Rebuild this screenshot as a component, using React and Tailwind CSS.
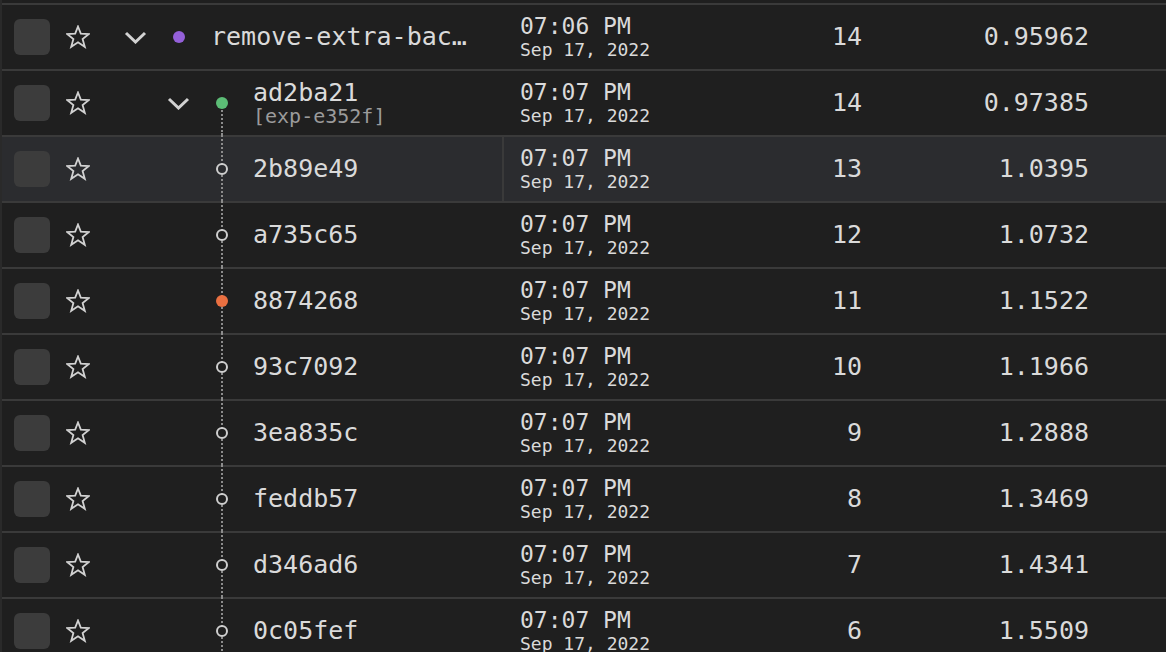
import React from 'react';

const rows = [
  { id: 'remove-extra-background-check', depth: 0, chevron: true, marker: 'purple', time: '07:06 PM', step: 14, metric: '0.95962', clip: true },
  { id: 'ad2ba21', tag: '[exp-e352f]', depth: 1, chevron: true, marker: 'green', line: 'half', time: '07:07 PM', step: 14, metric: '0.97385' },
  { id: '2b89e49', depth: 1, marker: 'ring', line: 'full', time: '07:07 PM', step: 13, metric: '1.0395', active: true },
  { id: 'a735c65', depth: 1, marker: 'ring', line: 'full', time: '07:07 PM', step: 12, metric: '1.0732' },
  { id: '8874268', depth: 1, marker: 'orange', line: 'full', time: '07:07 PM', step: 11, metric: '1.1522' },
  { id: '93c7092', depth: 1, marker: 'ring', line: 'full', time: '07:07 PM', step: 10, metric: '1.1966' },
  { id: '3ea835c', depth: 1, marker: 'ring', line: 'full', time: '07:07 PM', step: 9, metric: '1.2888' },
  { id: 'feddb57', depth: 1, marker: 'ring', line: 'full', time: '07:07 PM', step: 8, metric: '1.3469' },
  { id: 'd346ad6', depth: 1, marker: 'ring', line: 'full', time: '07:07 PM', step: 7, metric: '1.4341' },
  { id: '0c05fef', depth: 1, marker: 'ring', line: 'full', time: '07:07 PM', step: 6, metric: '1.5509' },
];

const indent = { 0: 'w-[23px]', 1: 'w-[66px]' };
const nameGap = { 0: 'pl-[10px]', 1: 'pl-[9px]' };

const StarIcon = () => (
  <svg width="24" height="24" viewBox="0 0 24 24" className="shrink-0">
    <polygon
      points="12,1.5 14.8,8.6 22.9,9 16.6,14 18.8,21.8 12,17.3 5.2,21.8 7.4,14 1.1,9 9.2,8.6"
      fill="none"
      stroke="#d2d2d2"
      strokeWidth="1.8"
      strokeLinejoin="miter"
    />
  </svg>
);

const Chevron = () => (
  <svg width="23" height="13" viewBox="0 0 23 13">
    <polyline points="2,2 11.5,11 21,2" fill="none" stroke="#d2d2d2" strokeWidth="3" />
  </svg>
);

const Marker = ({ kind, active }) => {
  if (kind === 'ring') {
    return (
      <div className={`relative z-10 w-3 h-3 rounded-full border-2 border-[#cfcfcf] ${active ? 'bg-[#2b2c2f]' : 'bg-[#1f1f1f]'}`} />
    );
  }
  const color = kind === 'purple' ? 'bg-[#9460d9]' : kind === 'green' ? 'bg-[#5cbd76]' : 'bg-[#ea7041]';
  return <div className={`relative z-10 w-3 h-3 rounded-full ${color}`} />;
};

const Row = ({ r }) => (
  <div className={`flex items-center h-[66px] border-t-2 border-[#3a3a3a] ${r.active ? 'bg-[#2b2c2f]' : ''}`}>
    <div className="pl-3 shrink-0">
      <div className="w-9 h-9 rounded-md bg-[#3c3c3c]" />
    </div>
    <div className="ml-4 shrink-0">
      <StarIcon />
    </div>
    <div className="flex items-stretch self-stretch w-[412px] pr-[28px] min-w-0">
      <div className={`${indent[r.depth]} shrink-0`} />
      <div className="w-[44px] shrink-0 flex items-center justify-center">
        {r.chevron && <Chevron />}
      </div>
      <div className="relative w-[44px] shrink-0 flex items-center justify-center">
        {r.line === 'full' && (
          <div className="absolute left-[21px] top-[-2px] bottom-0 border-l-2 border-dotted border-[#8c8c8c]" />
        )}
        {r.line === 'half' && (
          <div className="absolute left-[21px] top-1/2 bottom-0 border-l-2 border-dotted border-[#8c8c8c]" />
        )}
        <Marker kind={r.marker} active={r.active} />
      </div>
      <div className={`${nameGap[r.depth]} flex flex-col justify-center min-w-0`}>
        <div className={`text-[25px] leading-[28px] text-[#dadada] whitespace-nowrap ${r.clip ? 'truncate' : ''}`}>{r.id}</div>
        {r.tag && <div className="text-[20px] leading-[22px] -mt-[2px] text-[#9b9b9b] whitespace-nowrap">{r.tag}</div>}
      </div>
    </div>
    <div className={`w-[200px] self-stretch flex flex-col justify-center pl-4 border-l-2 ${r.active ? 'border-[#3a3a3a]' : 'border-transparent'}`}>
      <div className="text-[23px] leading-[25px] text-[#dadada] whitespace-nowrap">{r.time}</div>
      <div className="text-[18px] leading-[21px] text-[#dadada] whitespace-nowrap">Sep 17, 2022</div>
    </div>
    <div className="w-[160px] text-right text-[25px] text-[#dadada]">{r.step}</div>
    <div className="w-[227px] text-right text-[25px] text-[#dadada]">{r.metric}</div>
  </div>
);

export default function App() {
  return (
    <div className="h-[652px] w-[1166px] overflow-hidden bg-[#1f1f1f] font-['DejaVu_Sans_Mono','Liberation_Mono',monospace]">
      <div className="border-l-2 border-[#2a2a2a] pt-[3px] h-full">
        {rows.map((r) => (
          <Row key={r.id} r={r} />
        ))}
      </div>
    </div>
  );
}
